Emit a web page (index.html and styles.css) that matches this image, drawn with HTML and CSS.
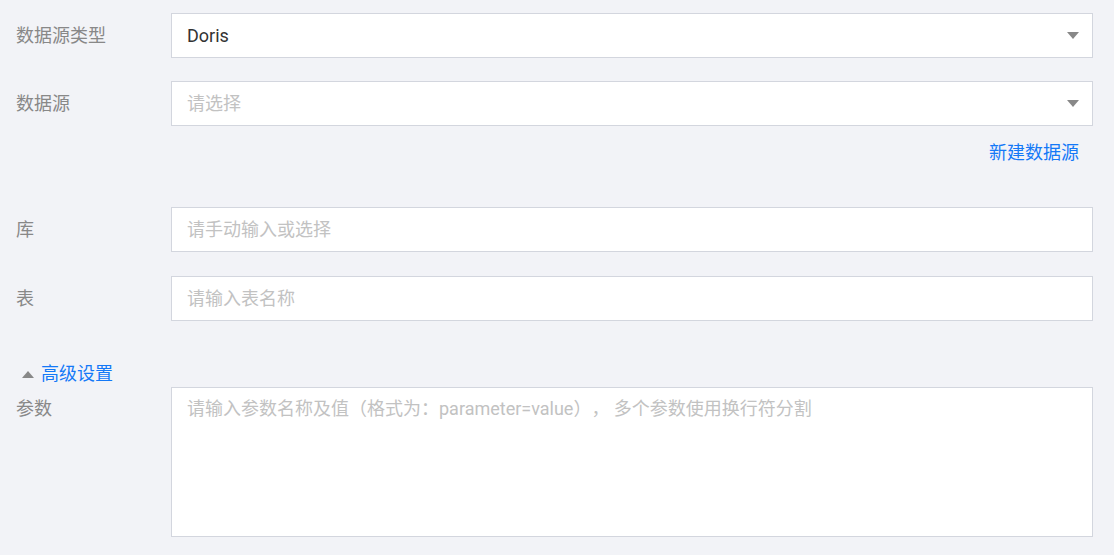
FILE: index.html
```html
<!DOCTYPE html>
<html lang="zh-CN">
<head>
    <meta charset="UTF-8">
    <meta name="viewport" content="width=device-width, initial-scale=1.0">
    <title>数据源配置</title>
    <link rel="stylesheet" href="styles.css">
</head>
<body>
  <div class="formWrap">

    <div class="formRow">
      <label class="formLabel">数据源类型</label>
      <div class="selectBox">
        <span class="selectValue">Doris</span>
        <i class="caret"></i>
      </div>
    </div>

    <div class="formRow">
      <label class="formLabel">数据源</label>
      <div class="selectBox">
        <span class="selectValue placeholder">请选择</span>
        <i class="caret"></i>
      </div>
    </div>

    <div class="linkRow">
      <a class="textLink" href="#">新建数据源</a>
    </div>

    <div class="formRow wide">
      <label class="formLabel">库</label>
      <div class="inputBox">
        <span class="placeholder">请手动输入或选择</span>
      </div>
    </div>

    <div class="formRow">
      <label class="formLabel">表</label>
      <div class="inputBox">
        <span class="placeholder">请输入表名称</span>
      </div>
    </div>

    <!-- 고급 설정 -->
    <div class="advancedToggle">
      <i class="caretUp"></i>
      <span>高级设置</span>
    </div>

    <div class="formRow top">
      <label class="formLabel">参数</label>
      <div class="textareaBox">
        <span class="placeholder">请输入参数名称及值（格式为：parameter=value）， 多个参数使用换行符分割</span>
      </div>
    </div>

  </div>
</body>
</html>
```

FILE: styles.css
```css
* {
  box-sizing: border-box;
}

body {
  margin: 0;
  background-color: #f2f3f7;
  font-family: Roboto, "Noto Sans CJK SC", sans-serif;
  font-size: 18px;
  color: #333;
  text-spacing-trim: space-all;
}

.formWrap {
  padding: 13px 21px 0 16px;
}

.formRow {
  display: flex;
  align-items: center;
  margin-bottom: 23px;
}

.formRow.wide {
  margin-bottom: 24px;
}

.formRow.top {
  align-items: flex-start;
}

.formLabel {
  width: 155px;
  flex-shrink: 0;
  color: #888;
  line-height: 24px;
}

.formRow.top .formLabel {
  padding-top: 10px;
}

.selectBox,
.inputBox,
.textareaBox {
  flex: 1;
  height: 45px;
  display: flex;
  align-items: center;
  padding: 0 13px 0 15px;
  background-color: #fff;
  border: 1px solid #d3d6de;
  line-height: 24px;
}

.selectValue {
  flex: 1;
}

.placeholder {
  color: #c2c2c2;
}

/* 아래 화살표 */
.caret {
  width: 0;
  height: 0;
  border-left: 6px solid transparent;
  border-right: 6px solid transparent;
  border-top: 7px solid #888;
}

.linkRow {
  display: flex;
  justify-content: flex-end;
  padding-right: 14px;
  margin-top: -8px;
  line-height: 24px;
}

.textLink {
  color: #1479f7;
  text-decoration: none;
}

.linkRow + .formRow {
  margin-top: 42px;
}

.advancedToggle {
  display: flex;
  align-items: center;
  margin-top: 41px;
  padding-left: 6px;
  color: #1479f7;
  line-height: 24px;
}

/* 위 화살표 */
.caretUp {
  width: 0;
  height: 0;
  margin-right: 7px;
  border-left: 6px solid transparent;
  border-right: 6px solid transparent;
  border-bottom: 7px solid #888;
}

.advancedToggle + .formRow {
  margin-top: 1px;
}

.textareaBox {
  height: 150px;
  align-items: flex-start;
  padding-top: 9px;
}
```
